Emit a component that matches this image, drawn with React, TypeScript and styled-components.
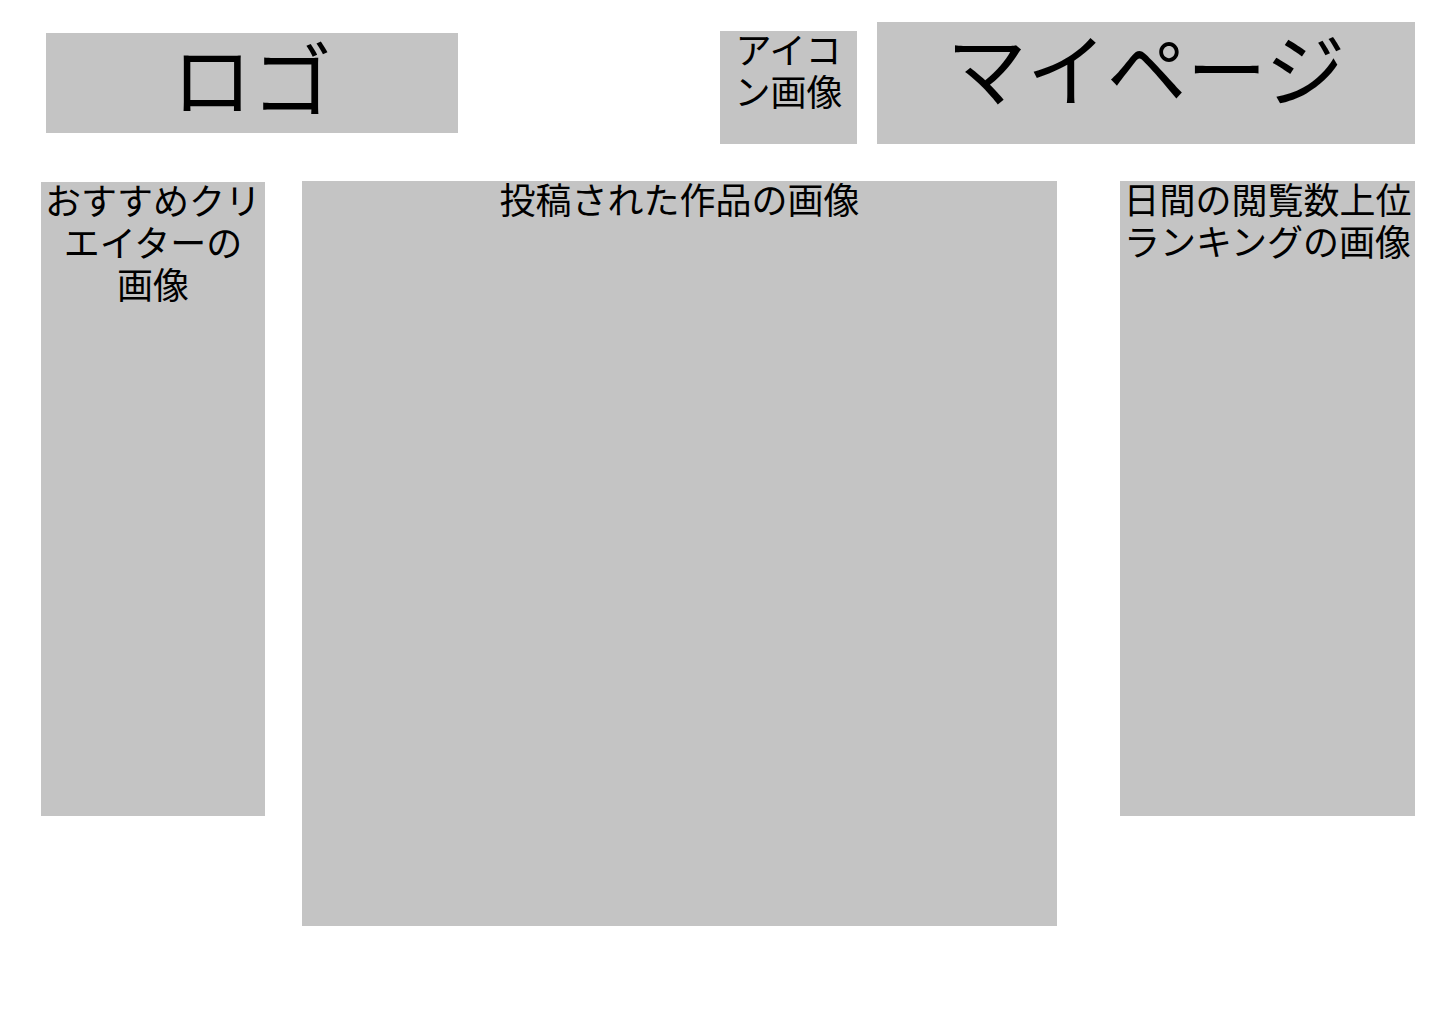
import React from "react";
import styled, { createGlobalStyle } from "styled-components";

const GlobalStyle = createGlobalStyle`
  html, body {
    margin: 0;
    padding: 0;
    background: #ffffff;
  }
  body {
    font-family: Roboto, "Noto Sans CJK JP", sans-serif;
    color: #000000;
  }
  * { box-sizing: border-box; }
`;

const Page = styled.div`
  width: 1440px;
  height: 1024px;
  display: flex;
  flex-direction: column;
`;

const Header = styled.header`
  display: flex;
  align-items: center;
  height: 144px;
  padding: 22px 25px 0 46px;
`;

const Placeholder = styled.div<{ $w: number; $h: number; $size: number; $padTop?: number }>`
  flex: none;
  width: ${(p) => p.$w}px;
  height: ${(p) => p.$h}px;
  padding-top: ${(p) => p.$padTop ?? 0}px;
  background: #c4c4c4;
  font-family: Roboto, "Noto Sans CJK JP", sans-serif;
  font-weight: 400;
  font-size: ${(p) => p.$size}px;
  line-height: 1.172;
  text-align: center;
`;

const Logo = styled(Placeholder)``;

const IconBox = styled(Placeholder)`
  margin-left: auto;
  align-self: flex-end;
`;

const MyPage = styled(Placeholder)`
  margin-left: 20px;
`;

const Main = styled.main`
  display: flex;
  align-items: flex-start;
  padding: 37px 25px 0 41px;
`;

const Panel = styled(Placeholder)<{ $offset?: number }>`
  margin-top: ${(p) => p.$offset ?? 0}px;
`;

const Feed = styled(Panel)`
  margin-left: 37px;
`;

const Ranking = styled(Panel)`
  margin-left: 63px;
`;

export default function App() {
  return (
    <>
      <GlobalStyle />
      <Page>
        <Header>
          <Logo $w={412} $h={100} $size={80} $padTop={4}>
            ロゴ
          </Logo>
          <IconBox $w={137} $h={113} $size={36}>
            アイコン画像
          </IconBox>
          <MyPage $w={538} $h={122} $size={80} $padTop={5}>
            マイページ
          </MyPage>
        </Header>
        <Main>
          <Panel $w={224} $h={634} $size={36} $offset={1}>
            おすすめクリエイターの
            <br />
            画像
          </Panel>
          <Feed $w={755} $h={745} $size={36}>
            投稿された作品の画像
          </Feed>
          <Ranking $w={295} $h={635} $size={36}>
            日間の閲覧数上位ランキングの画像
          </Ranking>
        </Main>
      </Page>
    </>
  );
}
